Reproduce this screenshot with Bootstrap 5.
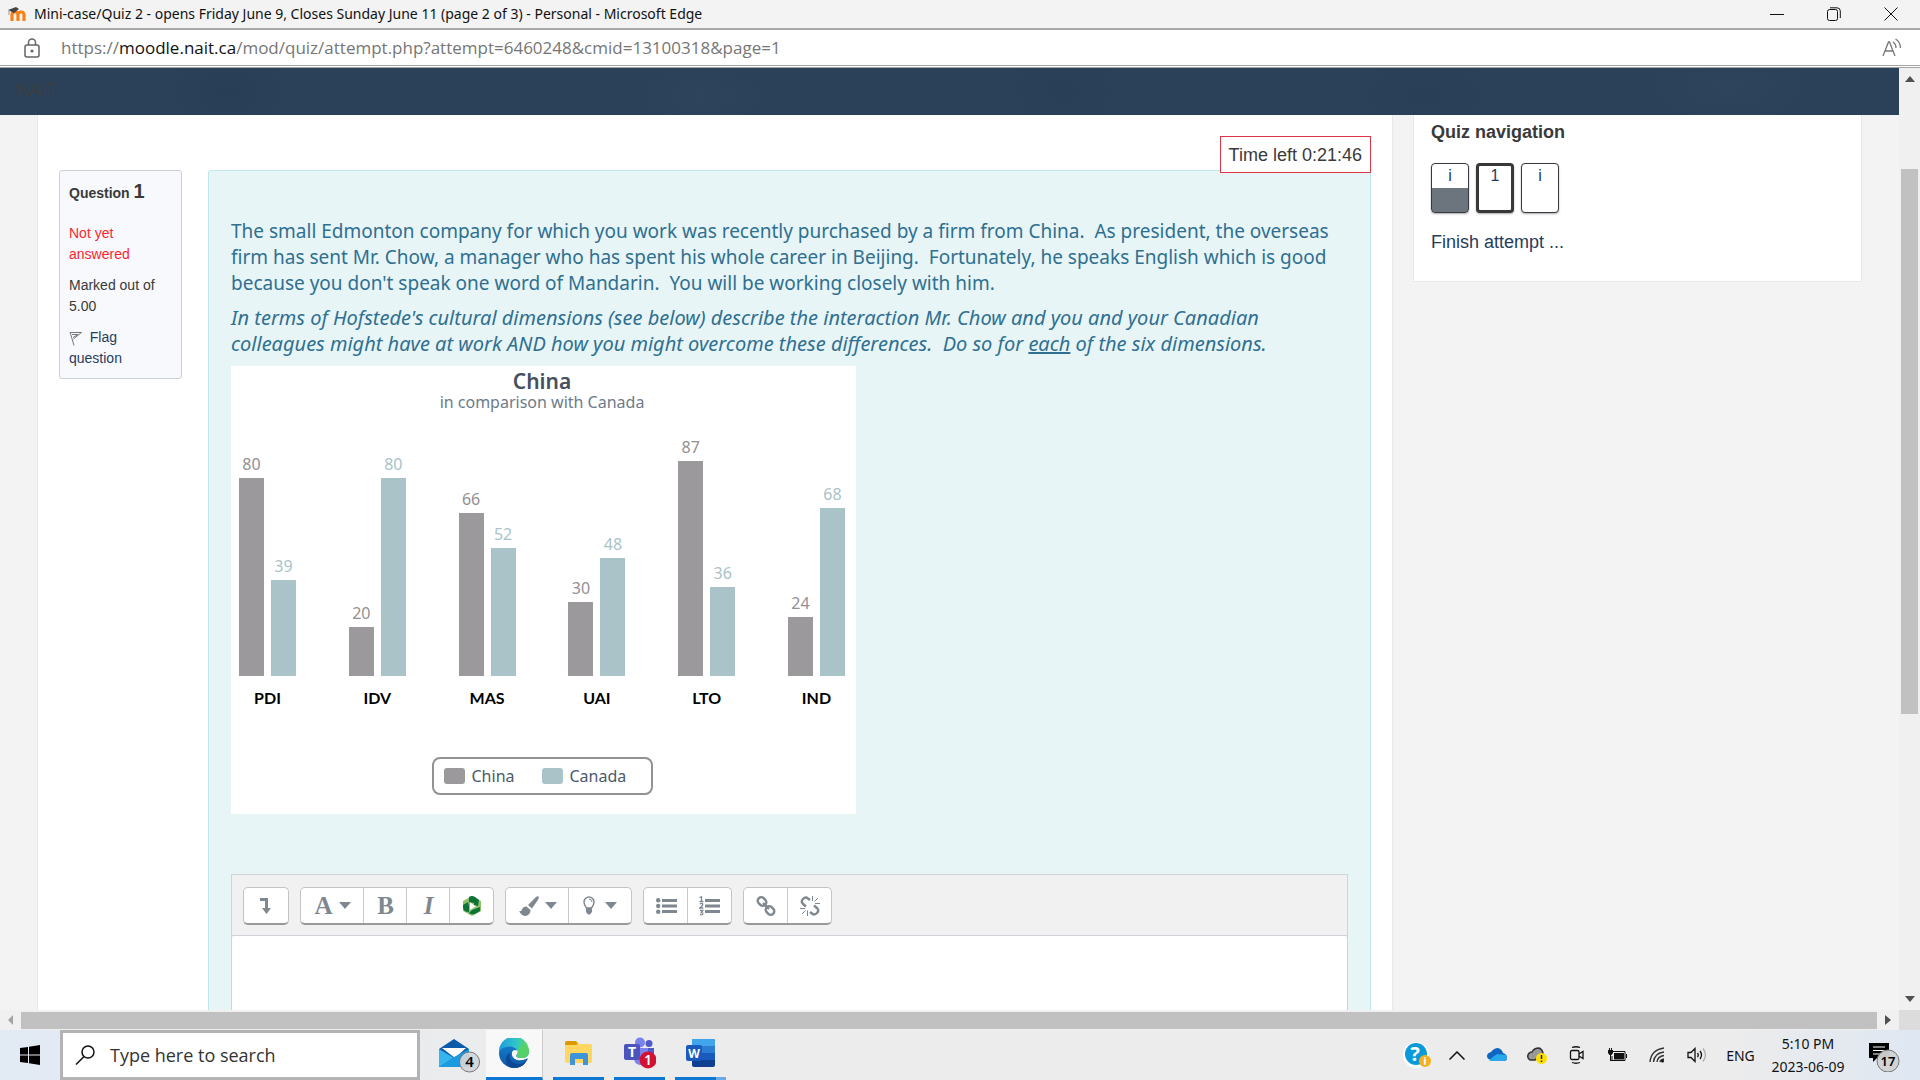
<!DOCTYPE html>
<html lang="en">
<head>
<meta charset="utf-8">
<meta name="viewport" content="width=device-width, initial-scale=1">
<title>Mini-case/Quiz 2 - opens Friday June 9, Closes Sunday June 11 (page 2 of 3)</title>
<link href="https://cdn.jsdelivr.net/npm/bootstrap@5.3.0/dist/css/bootstrap.min.css" rel="stylesheet">
<style>
body{font-family:"Liberation Sans",Arial,sans-serif;font-size:18px;line-height:26px;color:#3a3a3a;background:#f3f3f3}
a{text-decoration:none;color:#263c5c}
svg{display:block;flex:none}
.ui{font-family:"Noto Sans","Open Sans",sans-serif}
.titlebar{height:30px;background:#f3f3f3;border-bottom:2px solid #a9a9a9;color:#111;font-size:14px;padding:0 22px 0 7px}
.titlebar .caption{margin-left:7px}
.winbtns{gap:43px}
.plainbtn{border:0;background:none;padding:0;color:inherit}
.urlbar{height:38px;background:#fff;border-bottom:3px double #a5a5a5;padding:0 18px 0 24px}
.urlbox{font-family:"Open Sans","Noto Sans",sans-serif;font-size:17px;color:#767676;margin-left:21px}
.urlbox b{font-weight:400;color:#111}
.sitebar{height:47px;flex:none;color:#3c3e42;padding:9px 16px;background:radial-gradient(ellipse 60px 40px at 12% 50%,#283e56,transparent),radial-gradient(ellipse 70px 30px at 37% 60%,#2d445c,transparent),radial-gradient(ellipse 60px 40px at 56% 50%,#293f57,transparent),radial-gradient(ellipse 70px 40px at 75% 60%,#293f57,transparent),radial-gradient(ellipse 90px 40px at 91% 40%,#2d445c,transparent),#2b4159}
.sheet{padding:0 37px;gap:20px}
.mainpane{background:#fff;padding:21px 21px 0;border:solid #e9e9e9;border-width:0 1px}
.timer{border:1px solid #dc3545;background:#fff;padding:5px 8px;margin-bottom:-3px;z-index:1;height:37px}
.question{gap:26px}
.info{width:123px;border:1px solid #cad0d7;border-radius:3px;background:#f8f9fc;padding:10px 9px 9px;font-size:14px;line-height:21px}
.info h3{font-size:14px;line-height:21px;font-weight:700;margin:0 0 19px}
.info h3 span{font-size:20px}
.info p{margin:0 0 10px}
.notyet{color:#ff1f2f}
.stem{background:#e7f5f6;border:1px solid #bfe7ea;border-radius:3px;padding:47px 22px 0;min-width:0;color:#2f6f91}
.prose{font-family:"Noto Sans","Open Sans",sans-serif;font-size:19px;line-height:26px}
.prose p{margin:0 0 9px;white-space:nowrap}
.prose .ask{font-size:20px;font-style:italic}
.chart{width:625px;height:448px;background:#fff;font-family:"Noto Sans","Open Sans",sans-serif;font-size:16px;line-height:20px;color:#6d7b8a;padding:4px 11px 0 8px}
.chart h4{font-size:21px;line-height:22px;font-weight:600;color:#45515f;margin:0}
.plot{height:264px}
.bars{gap:7px}
.bars>div{width:25px;display:flex;flex-direction:column;align-items:center}
.bars i{display:block;width:25px;margin-top:4px}
.cn{color:#929092}.cn i{background:#9b999b}
.ca{color:#a9c3c9}.ca i{background:#a9c3c9}
.cats{padding-top:12px;margin-bottom:49px}
.cat{font-family:Lato,"Open Sans",sans-serif;font-size:16px;font-weight:700;color:#000;width:57px;text-align:center}
.legend{border:2px solid #929292;border-radius:8px;width:221px;height:38px;padding:0 10px;gap:7px;color:#4b5a69}
.swatch{width:21px;height:16px;border-radius:3px}
.swatch.second{margin-left:20px}
.editor{margin-top:60px;border:1px solid #ced4da}
.tools{background:#f1f1f1;height:61px;padding:12px 11px;gap:11px;border-bottom:1px solid #ced4da}
.tools .btn-group{border:1px solid #c4c4c4;border-bottom:2px solid #999;border-radius:5px;background:#fff;height:38px}
.tools .btn{background:#fff;border:0;border-left:1px solid #c9c9c9;color:#7f8890;padding:0;width:44px;margin:0;flex:none;display:flex;align-items:center;justify-content:center;gap:6px}
.tools .btn:first-child{border-left:0}
.tools .wide{width:63px}
.tools .btn svg{fill:currentColor}
.ser{font-family:"Liberation Serif",serif;font-size:25px;font-weight:700;line-height:30px}
.pad{display:block;width:100%;height:300px;border:0;resize:none;background:#fff;border-radius:4px 4px 0 0}
.navcard{width:449px;height:167px;flex:none;background:#fff;border:solid #e9e9e9;border-width:0 1px 1px;padding:4px 17px}
.navcard h2{font-size:18px;line-height:26px;font-weight:700;margin:0 0 18px}
.qbtns{gap:7px;margin-bottom:16px}
.qbtn{width:38px;height:50px;border:1px solid #343a40;border-radius:4px;text-align:center;line-height:24px;background:#fff;overflow:hidden;font-size:16px;box-shadow:0 1px 2px #aaa}
.qbtn.seen{background:linear-gradient(#fff 50%,#6c757d 50%)}
.qbtn.cur{border:3px solid #383838;line-height:20px}
.vscroll{width:21px;background:#f0f0f0;flex:none}
.vthumb{top:101px;left:2px;width:17px;height:545px;background:#c1c1c1}
.hscroll{height:20px;background:#f0f0f0;flex:none}
.hthumb{height:17px;background:#c1c1c1}
.corner{width:21px;height:20px;background:#dcdcdc}
.taskbar{height:50px;flex:none;color:#111;background:linear-gradient(90deg,#e2eaf4,#ececec 30%,#ececec 90%,#dfe7f2)}
.start{width:60px}
.search{width:360px;height:50px;border:3px solid #b3b3b3;background:#fff;padding:0 12px;gap:15px}
.search input{border:0;outline:0;padding:0;font-family:"Open Sans","Noto Sans",sans-serif;font-size:18px;width:260px;color:#111}
.search input::placeholder{color:#333;opacity:1}
.app{width:51px;height:50px;border-bottom:3px solid #0a78d4;padding-bottom:1px}
.app.on{width:57px;background:#f8f8f8;border-right:1px solid #ccc}
.app.many{border-image:linear-gradient(90deg,#0a78d4 80%,#6aaae6 80%) 1}
.apps{gap:10px;padding-left:18px}
.mail{margin-right:-6px}
.tray{font-size:14px;line-height:23px;padding-right:9px}
.slot{width:40px;display:flex;justify-content:center}
.lang{width:47px}
.clock{width:88px;margin-right:13px}
</style>
<script src="https://cdn.jsdelivr.net/npm/bootstrap@5.3.0/dist/js/bootstrap.bundle.min.js"></script>
</head>
<body>
<div class="vh-100 d-flex flex-column overflow-hidden">
<header class="ui flex-shrink-0">
 <div class="titlebar d-flex align-items-center">
  <svg width="20" height="18" viewBox="0 0 20 18"><path d="M5 16V10q0-3 3-3t3 3v6M11 10q0-3 3-3t3 3v6" fill="none" stroke="#f98012" stroke-width="3.2"/><path d="M1 5l8-3 3 2-5 4z" fill="#444"/><path d="M2 5v5" stroke="#999"/></svg>
  <span class="caption flex-fill">Mini-case/Quiz 2 - opens Friday June 9, Closes Sunday June 11 (page 2 of 3) - Personal - Microsoft Edge</span>
  <div class="winbtns d-flex align-items-center">
   <button class="plainbtn" aria-label="Minimize"><svg width="14" height="14"><path d="M0 7.5h14" stroke="#111"/></svg></button>
   <button class="plainbtn" aria-label="Restore"><svg width="14" height="14" fill="none" stroke="#111"><rect x=".5" y="2.500" width="10" height="11" rx="2"/><path d="M3 .8h7q3.300 0 3.300 3.300V11"/></svg></button>
   <button class="plainbtn" aria-label="Close"><svg width="14" height="14"><path d="M.5.5l13 13M13.500.5l-13 13" stroke="#111"/></svg></button>
  </div>
 </div>
 <div class="urlbar d-flex align-items-center">
  <svg width="16" height="20" viewBox="0 0 16 20" fill="none" stroke="#666" stroke-width="1.500"><rect x="1" y="7" width="14" height="12" rx="2"/><path d="M4.500 7V4.500a3.500 3.500 0 0 1 7 0V7"/><circle cx="8" cy="13" r=".8" fill="#666"/></svg>
  <a href="#" class="urlbox flex-fill">https://<b>moodle.nait.ca</b>/mod/quiz/attempt.php?attempt=6460248&amp;cmid=13100318&amp;page=1</a>
  <button class="plainbtn" aria-label="Read aloud"><svg width="20" height="20" viewBox="0 0 20 20" fill="none" stroke="#777" stroke-width="1.300"><path d="M1 18L6.500 4h1L13 18M3 13h8M11 4q3 2 3 6M13.500 1q5 3 5 9"/></svg></button>
 </div>
</header>

<div class="d-flex flex-fill overflow-hidden">
 <div class="flex-fill d-flex flex-column overflow-hidden">
  <nav class="sitebar">NAIT</nav>
  <div class="sheet d-flex flex-fill overflow-hidden">
   <main class="mainpane flex-fill overflow-hidden">
    <div class="d-flex justify-content-end"><div class="timer position-relative">Time left 0:21:46</div></div>
    <div class="question d-flex align-items-start">
     <section class="info flex-shrink-0">
      <h3>Question <span>1</span></h3>
      <p class="notyet">Not yet answered</p>
      <p>Marked out of 5.00</p>
      <a href="#"><svg class="d-inline-block" width="13" height="15" viewBox="0 0 13 15" fill="none" stroke="#777"><path d="M1 1l4 13.500M1 1.500h11.500L4.500 8M3 3.500h6L4 6.500"/></svg>&nbsp; Flag question</a>
     </section>
     <section class="stem flex-fill">
      <div class="prose">
       <p>The small Edmonton company for which you work was recently purchased by a firm from China.&nbsp; As president, the overseas<br>firm has sent Mr. Chow, a manager who has spent his whole career in Beijing.&nbsp; Fortunately, he speaks English which is good<br>because you don't speak one word of Mandarin.&nbsp; You will be working closely with him.</p>
       <p class="ask">In terms of Hofstede's cultural dimensions (see below) describe the interaction Mr. Chow and you and your Canadian<br>colleagues might have at work AND how you might overcome these differences.&nbsp; Do so for <u>each</u> of the six dimensions.</p>
      </div>
      <div class="chart">
       <h4 class="text-center">China</h4>
       <div class="text-center">in comparison with Canada</div>
       <div class="plot d-flex justify-content-between align-items-end">
        <div class="bars d-flex align-items-end"><div class="cn">80<i style="height:198px"></i></div><div class="ca">39<i style="height:96px"></i></div></div>
        <div class="bars d-flex align-items-end"><div class="cn">20<i style="height:49px"></i></div><div class="ca">80<i style="height:198px"></i></div></div>
        <div class="bars d-flex align-items-end"><div class="cn">66<i style="height:163px"></i></div><div class="ca">52<i style="height:128px"></i></div></div>
        <div class="bars d-flex align-items-end"><div class="cn">30<i style="height:74px"></i></div><div class="ca">48<i style="height:118px"></i></div></div>
        <div class="bars d-flex align-items-end"><div class="cn">87<i style="height:215px"></i></div><div class="ca">36<i style="height:89px"></i></div></div>
        <div class="bars d-flex align-items-end"><div class="cn">24<i style="height:59px"></i></div><div class="ca">68<i style="height:168px"></i></div></div>
       </div>
       <div class="cats d-flex justify-content-between"><span class="cat">PDI</span><span class="cat">IDV</span><span class="cat">MAS</span><span class="cat">UAI</span><span class="cat">LTO</span><span class="cat">IND</span></div>
       <div class="legend d-flex align-items-center mx-auto">
        <span class="swatch" style="background:#9b999b"></span><span>China</span>
        <span class="swatch second" style="background:#a9c3c9"></span><span>Canada</span>
       </div>
      </div>
      <div class="editor">
       <div class="tools d-flex">
        <div class="btn-group"><button class="btn" aria-label="Show more buttons"><svg width="14" height="18" viewBox="0 0 14 18"><path d="M1 1h8v10h3l-4.500 6L3 11h3V4H1z"/></svg></button></div>
        <div class="btn-group">
         <button class="btn wide"><span class="ser">A</span><svg width="12" height="7"><path d="M0 0h12L6 7z"/></svg></button>
         <button class="btn ser">B</button>
         <button class="btn ser fst-italic">I</button>
         <button class="btn" aria-label="Record media"><svg width="18" height="20" viewBox="0 0 18 20"><path d="M9 0l9 5v10l-9 5-9-5V5z" fill="#8fc06c"/><path d="M6 1q3-2 6 0l4 3-1 6-4-1V7L6 6zM0 9l5-3 1 4v6q-6 0-6-5zM9 14l8-3v4l-5 3q-4 1-6-1z" fill="#0f7338"/><path d="M7 6.500l6 3.700-6 3.800z" fill="#fff"/></svg></button>
        </div>
        <div class="btn-group">
         <button class="btn wide" aria-label="Font color"><svg width="20" height="20" viewBox="0 0 20 20"><path d="M19.500.5q1 1-1 4L13 12.500 9 9l7.500-7.500q2-2 3-1zM7.500 10.500l4 3.500q0 5-5 6-4 0-6.500-5 2 1 3-1.500 1-3 4.500-3z"/></svg><svg width="12" height="7"><path d="M0 0h12L6 7z"/></svg></button>
         <button class="btn wide" aria-label="Background color"><svg width="12" height="19" viewBox="0 0 12 19"><path d="M3.500 12Q1 8.500 1 6a5 5 0 0 1 10 0q0 2.500-2.500 6z" fill="none" stroke="currentColor" stroke-width="1.500"/><path d="M3 12h6v4l-2 2.500H5L3 16z"/><path d="M6 3q2.500 0 3 3" fill="none" stroke="currentColor"/></svg><svg class="ms-1" width="12" height="7"><path d="M0 0h12L6 7z"/></svg></button>
        </div>
        <div class="btn-group">
         <button class="btn" aria-label="Unordered list"><svg width="21" height="16"><circle cx="2.200" cy="2.200" r="2.200"/><circle cx="2.200" cy="8" r="2.200"/><circle cx="2.200" cy="13.800" r="2.200"/><path d="M6 1h15v3H6zM6 6.500h15v3H6zM6 12h15v3H6z"/></svg></button>
         <button class="btn" aria-label="Ordered list"><svg width="21" height="20" viewBox="0 0 21 20"><path d="M6 3h15v3H6zM6 8.500h15v3H6zM6 14h15v3H6z"/><path d="M.5 1.500L2.500.8V5.500M.5 5.500h4M.8 8q3-1.500 3 .5Q3.500 10 .8 12h3.500M.8 14.500h3l-1.500 2q2 0 1.500 1.500-1 1.500-3 .5" fill="none" stroke="currentColor" stroke-width="1.300"/></svg></button>
        </div>
        <div class="btn-group">
         <button class="btn" aria-label="Link"><svg width="20" height="20" viewBox="0 0 20 20"><g fill="none" stroke="currentColor" stroke-width="2.400"><rect x="1.500" y="2" width="9" height="7" rx="3.300" transform="rotate(45 6 5.500)"/><rect x="9.500" y="11" width="9" height="7" rx="3.300" transform="rotate(45 14 14.500)"/><path d="M7 7l6 6"/></g></svg></button>
         <button class="btn" aria-label="Unlink"><svg width="20" height="20" viewBox="0 0 20 20"><g fill="none" stroke="currentColor" stroke-width="2.400"><path d="M10 4L8 2.500Q5.500.5 3 3T3 8l3 2.500M10 16l2 1.500q2.500 2 5-.5t0-5L14 9.500"/></g><path d="M12.500 5V0M14.500 5.500L18 2M15 7.500h5M7.500 14.500V20M5.500 14.500L2 18M5 12.500H0" fill="none" stroke="currentColor"/></svg></button>
        </div>
       </div>
       <textarea class="pad" aria-label="Answer text"></textarea>
      </div>
     </section>
    </div>
   </main>
   <aside class="navcard">
    <h2>Quiz navigation</h2>
    <div class="qbtns d-flex"><a href="#" class="qbtn seen">i</a><a href="#" class="qbtn cur">1</a><a href="#" class="qbtn">i</a></div>
    <a href="#">Finish attempt ...</a>
   </aside>
  </div>
 </div>
 <div class="vscroll position-relative d-flex flex-column justify-content-between align-items-center py-2">
  <svg width="10" height="6" fill="#505050"><path d="M0 6h10L5 0z"/></svg>
  <div class="vthumb position-absolute"></div>
  <svg width="10" height="6" fill="#505050"><path d="M0 0h10L5 6z"/></svg>
 </div>
</div>
<div class="hscroll d-flex align-items-center">
 <svg class="mx-2" width="5" height="10" fill="#a3a3a3"><path d="M5 0v10L0 5z"/></svg>
 <div class="hthumb flex-fill"></div>
 <svg class="mx-2" width="6" height="10" fill="#505050"><path d="M0 0v10l6-5z"/></svg>
 <div class="corner"></div>
</div>

<footer class="taskbar ui d-flex align-items-center">
 <button class="start plainbtn d-flex justify-content-center" aria-label="Start"><svg width="20" height="20" viewBox="0 0 20 20"><path d="M0 3l8-1v7.500H0zM9 1.800L20 0v9.500H9zM0 10.500h8V18l-8-1zM9 10.500h11V20L9 18.200z"/></svg></button>
 <div class="search d-flex align-items-center">
  <svg width="20" height="20" viewBox="0 0 20 20" fill="none" stroke="#111" stroke-width="1.500"><circle cx="13" cy="7" r="6"/><path d="M9 11.500L1 19.500"/></svg>
  <input type="text" aria-label="Search" placeholder="Type here to search">
 </div>
 <div class="apps d-flex align-items-center flex-fill">
  <button class="plainbtn mail" aria-label="Mail"><svg width="44" height="36" viewBox="0 0 44 36"><path d="M1 12L16 2l15 10v18H1z" fill="#0a5cab"/><path d="M4 11h24l-11 10z" fill="#fff"/><path d="M1 12l15 9L1 30z" fill="#35b4ee"/><path d="M31 12v18H1l15-10z" fill="#1c9ae0"/><circle cx="31.500" cy="25" r="10" fill="#d2d6d8" fill-opacity=".92" stroke="#777"/><text x="31.500" y="30" font-size="15" font-weight="600" text-anchor="middle">4</text></svg></button>
  <button class="plainbtn app on d-flex align-items-center justify-content-center" aria-label="Microsoft Edge"><svg width="30" height="30" viewBox="0 0 30 30"><defs><linearGradient id="eg"><stop stop-color="#1b9de2"/><stop offset=".6" stop-color="#31c7c5"/><stop offset="1" stop-color="#62da55"/></linearGradient><linearGradient id="eb" x2="0" y2="1"><stop stop-color="#1688d6"/><stop offset="1" stop-color="#0c55a5"/></linearGradient></defs><circle cx="15" cy="15" r="15" fill="url(#eb)"/><path d="M0 14A15 15 0 0 1 30 13q0 7-7 7-6 0-5-3 2-2 0-5Q14 7 7 9q-5 1-7 5z" fill="url(#eg)"/><path d="M11 15q-2 6 4 10 6 3 12-1-4 6-12 6-8-1-8-8 0-5 4-7z" fill="#0e4793"/><path d="M18.500 12.500q-4-1.500-5.500 1.500-1 6 5 8 6 1 10-1.500l2 .5V15q-1 5-7 5-7 0-5.500-3 2-2 1-4.500z" fill="#f8f8f8"/><path d="M28 8q4 7-.5 10.500Q22 21 18.500 19q-1-1 0-2.500 1.500-2 0-4.500L24 5z" fill="#56d16a"/></svg></button>
  <button class="plainbtn app d-flex align-items-center justify-content-center" aria-label="File Explorer"><svg width="28" height="24" viewBox="0 0 28 24"><path d="M0 2q0-2 2-2h9l3 3h11q2 0 2 2v15q0 2-2 2H2q-2 0-2-2z" fill="#ffd660"/><path d="M0 2q0-2 2-2h9l2 3-2 1H0z" fill="#d99a00"/><path d="M5 24V14q0-2 2-2h14q2 0 2 2v10h-5v-6h-8v6z" fill="#3d94d8"/></svg></button>
  <button class="plainbtn app d-flex align-items-center justify-content-center" aria-label="Teams"><svg width="32" height="32" viewBox="0 0 32 32"><circle cx="16" cy="5.500" r="5" fill="#7b83eb"/><circle cx="25" cy="6.500" r="3.500" fill="#5059c9"/><path d="M10 11h14v12q-3 6-8 5-6-1-6-7z" fill="#7b83eb"/><path d="M24 11h6v8q-1 5-6 4z" fill="#5059c9"/><rect y="7" width="16" height="16" rx="2" fill="#4b53bc"/><text x="8" y="20" font-size="14" font-weight="700" fill="#fff" text-anchor="middle">T</text><circle cx="24" cy="23" r="8.500" fill="#d11232"/><text x="24" y="28" font-size="14" font-weight="600" fill="#fff" text-anchor="middle">1</text></svg></button>
  <button class="plainbtn app many d-flex align-items-center justify-content-center" aria-label="Word"><svg width="29" height="28" viewBox="0 0 29 28"><rect x="6" width="23" height="28" rx="2" fill="#103f91"/><path d="M6 0h21q2 0 2 2v5H6z" fill="#41a5ee"/><path d="M6 7h23v7H6z" fill="#2b7cd3"/><path d="M6 14h23v7H6z" fill="#185abd"/><rect y="6" width="16" height="16" rx="2" fill="#185abd"/><text x="8" y="19" font-size="12" font-weight="700" fill="#fff" text-anchor="middle">W</text></svg></button>
 </div>
 <div class="tray d-flex align-items-center">
  <span class="slot"><svg width="28" height="28" viewBox="0 0 28 28"><circle cx="13" cy="14" r="13" fill="#fff"/><circle cx="13" cy="13" r="11" fill="#0a9ad9"/><text x="12" y="20" font-size="20" font-weight="700" fill="#fff" text-anchor="middle">?</text><circle cx="22" cy="20" r="6" fill="#f5b021"/><text x="22" y="24" font-size="11" font-weight="700" fill="#fff" text-anchor="middle">i</text></svg></span>
  <span class="slot"><svg width="16" height="9" fill="none" stroke="#111" stroke-width="1.500"><path d="M.5 8.500L8 1l7.500 7.500"/></svg></span>
  <span class="slot"><svg width="20" height="14" viewBox="0 0 20 14"><path d="M4 12Q0 11 0 8q0-3 4-4 3-4 7-4 4 1 5 5 4 1 4 4.500T17 13z" fill="#0f66c2"/><path d="M2 12l8-6 9 1q1 1 1 3-1 3-3 3H4z" fill="#28a8ea"/></svg></span>
  <span class="slot"><svg width="20" height="17" viewBox="0 0 20 17"><path d="M3 13Q0 11 1 8t4-3q2-4 7-4 3 1 4 5l-8 7z" fill="#999" stroke="#333" stroke-width="1.500"/><circle cx="14.500" cy="11.500" r="5.500" fill="#fbe100"/><path d="M14.500 8v4M14.500 13.500v1.500" stroke="#222" stroke-width="1.500"/></svg></span>
  <span class="slot"><svg width="16" height="18" viewBox="0 0 16 18" fill="none" stroke="#111" stroke-width="1.300"><rect x="1.500" y="4.500" width="8.500" height="9" rx="1.500"/><path d="M10 8l4-2.500v7L10 10M3 1.500q4-1.500 8 0M3 16.500q4 1.500 8 0"/></svg></span>
  <span class="slot"><svg width="20" height="14" viewBox="0 0 20 14"><path d="M5 3.500h13v9H5V8" fill="none" stroke="#111"/><path d="M7 5h10v6.500H7zM19 6h1v4h-1zM1 2h5v3L4.500 7h-2L1 5zM2 0h1v2H2zM4 0h1v2H4zM3 7h1v5h2v1H3z" fill="#111"/></svg></span>
  <span class="slot"><svg width="17" height="16" viewBox="0 0 17 16" fill="none" stroke="#333" stroke-width="1.400"><path d="M1 15Q2 3 15 1M4.500 15Q5.500 6 15 5M8 15q.5-5.500 7-6.500M11 15q.5-2.500 4-3"/><circle cx="13.500" cy="14" r="1.500" fill="#111" stroke="none"/></svg></span>
  <span class="slot"><svg width="20" height="16" viewBox="0 0 20 16" fill="none" stroke="#111" stroke-width="1.300"><path d="M1 5.500h3l4-4v13l-4-4H1zM10.500 6q1.500 2 0 4M13 4q3 4 0 8"/><path d="M16 1.500q5 6.500 0 13" stroke="#aaa"/></svg></span>
  <span class="lang text-center">ENG</span>
  <div class="clock text-center"><div>5:10 PM</div><div>2023-06-09</div></div>
  <svg width="46" height="34" viewBox="0 0 46 34"><path d="M4 5h20v15H12l-4 4v-4H4z"/><path d="M8 9h12M8 12.500h12M8 16h8" stroke="#fff"/><circle cx="23" cy="23" r="11" fill="#d0d2d5" fill-opacity=".95" stroke="#777"/><text x="23" y="28" font-size="13" font-weight="600" text-anchor="middle">17</text></svg>
 </div>
</footer>
</div>
</body>
</html>
